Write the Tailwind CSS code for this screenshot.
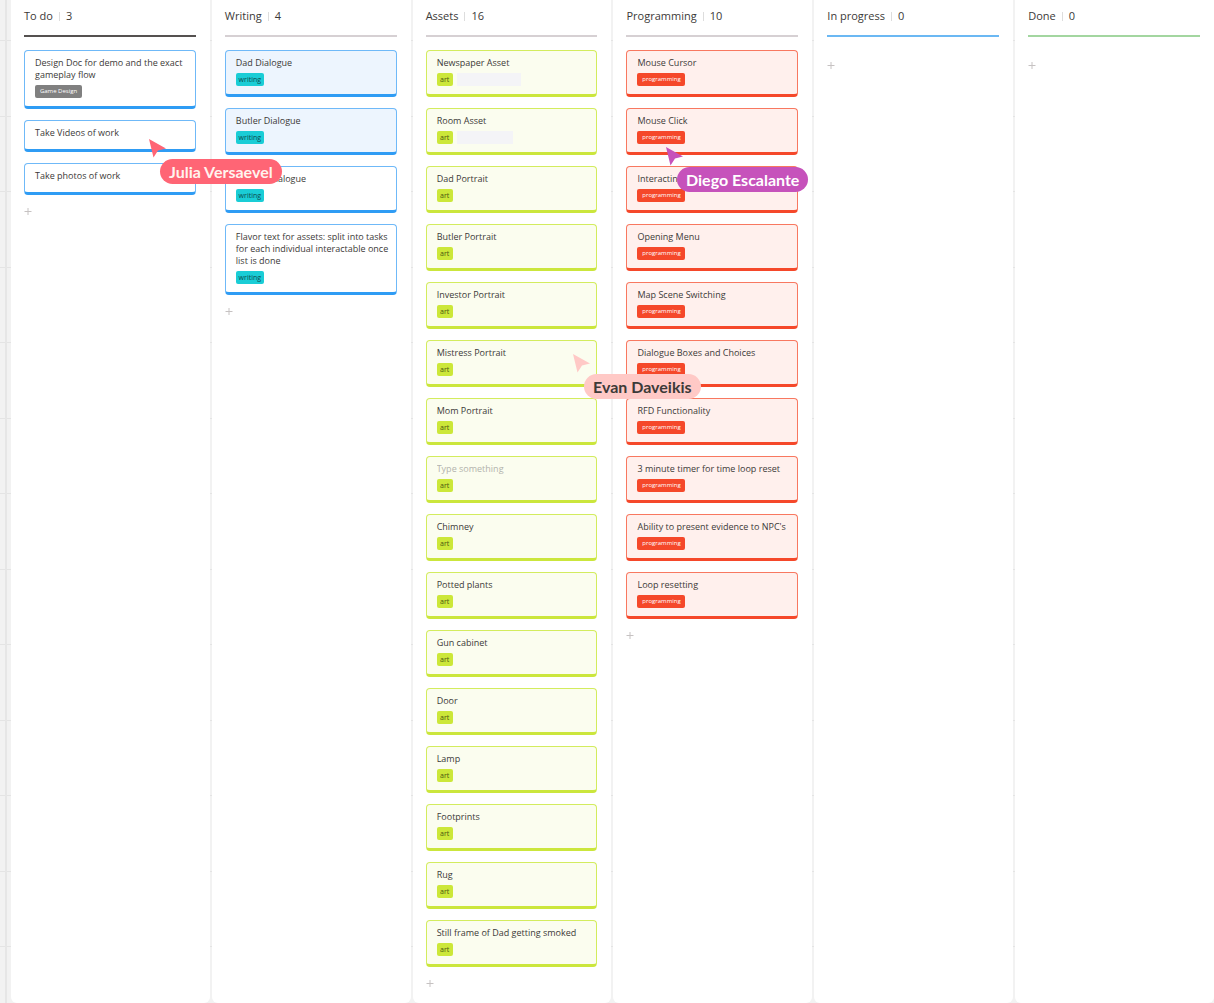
<!DOCTYPE html>
<html lang="en">
<head>
  <meta charset="UTF-8" />
  <meta name="viewport" content="width=device-width, initial-scale=1" />
  <title>Game Board</title>
  <script src="https://cdn.jsdelivr.net/npm/@tailwindcss/browser@4"></script>
  <style>
    body {
      font-family: 'Open Sans', 'Noto Sans', sans-serif;
    }
    .cursor-name {
      font-family: Lato, sans-serif;
    }
    /* canvas grid behind the columns */
    .canvas {
      background-color: #f2f2f2;
      background-image:
        linear-gradient(90deg, transparent 5px, #e6e6e6 5px, #e6e6e6 7px, transparent 7px),
        repeating-linear-gradient(180deg, #e4e4e4 0, #e4e4e4 1px, transparent 1px, transparent 75px, #e4e4e4 75px, #e4e4e4 76px, transparent 76px, transparent 151px);
      background-position: 0 0, 0 -35px;
      background-size: auto, 100% 1208px;
    }
  </style>
</head>
<body class="relative overflow-x-hidden text-[#3c3a38]">

  <main id="board" class="canvas grid min-h-screen grid-cols-6 gap-[2px] pl-[11px]">
    <!-- Columns are added here -->
  </main>

  <!-- Live cursors -->
  <div class="absolute left-[148px] top-[138px] pl-3 pt-[21px]">
    <svg class="absolute left-0 top-0" width="20" height="20" viewBox="0 0 20 20"><path d="M1 1 L18 10.5 L10 12.5 L5.5 19.5 Z" fill="#ff6575" /></svg>
    <span class="cursor-name block rounded-full bg-[#ff6575] px-[9px] text-[16px]/[25px] font-bold whitespace-nowrap text-[#fff3ee]">Julia Versaevel</span>
  </div>
  <div class="absolute left-[665px] top-[146px] pl-3 pt-[21px]">
    <svg class="absolute left-0 top-0" width="20" height="20" viewBox="0 0 20 20"><path d="M1 1 L18 10.5 L10 12.5 L5.5 19.5 Z" fill="#c652bb" /></svg>
    <span class="cursor-name block rounded-full bg-[#c652bb] px-[9px] text-[16px]/[25px] font-bold whitespace-nowrap text-white">Diego Escalante</span>
  </div>
  <div class="absolute left-[572px] top-[353px] pl-3 pt-[21px]">
    <svg class="absolute left-0 top-0" width="20" height="20" viewBox="0 0 20 20"><path d="M1 1 L18 10.5 L10 12.5 L5.5 19.5 Z" fill="#ffc9c6" /></svg>
    <span class="cursor-name block rounded-full bg-[#ffc9c6] px-[9px] text-[16px]/[25px] font-bold whitespace-nowrap text-[#3c3a38]">Evan Daveikis</span>
  </div>

  <script>
    const cardStyles = {
      blue: 'border-[#6fb9f8] border-b-[#2f9cf4] bg-white',
      blueFill: 'border-[#6fb9f8] border-b-[#2f9cf4] bg-[#edf5fe]',
      lime: 'border-[#d3ec5e] border-b-[#cbe63c] bg-[#fbfdef]',
      red: 'border-[#f87860] border-b-[#f5482a] bg-[#fff0ed]',
    };

    const tagStyles = {
      'Game Design': 'w-[47px] bg-[#808080] text-[6px] text-white',
      writing: 'w-7 bg-[#1acdd6] text-[7px] text-[#0b4a50]',
      art: 'w-4 bg-[#cce739] text-[7px] text-[#4a5410]',
      programming: 'w-12 bg-[#f5482a] text-[6px] text-white',
    };

    const art = (title, extra) => ({ title, tag: 'art', style: 'lime', extra });
    const code = (title) => ({ title, tag: 'programming', style: 'red' });

    const columns = [
      { name: 'To do', count: 3, line: 'bg-[#555150]', cards: [
        { title: 'Design Doc for demo and the exact gameplay flow', tag: 'Game Design', style: 'blue' },
        { title: 'Take Videos of work', style: 'blue' },
        { title: 'Take photos of work', style: 'blue' },
      ] },
      { name: 'Writing', count: 4, line: 'bg-[#d6d0d3]', cards: [
        { title: 'Dad Dialogue', tag: 'writing', style: 'blueFill' },
        { title: 'Butler Dialogue', tag: 'writing', style: 'blueFill' },
        { title: 'Mother Dialogue', tag: 'writing', style: 'blue' },
        { title: 'Flavor text for assets: split into tasks for each individual interactable once list is done', tag: 'writing', style: 'blue' },
      ] },
      { name: 'Assets', count: 16, line: 'bg-[#d6d0d3]', cards: [
        art('Newspaper Asset', 'w-16'), art('Room Asset', 'w-14'), art('Dad Portrait'), art('Butler Portrait'),
        art('Investor Portrait'), art('Mistress Portrait'), art('Mom Portrait'), art(''),
        art('Chimney'), art('Potted plants'), art('Gun cabinet'), art('Door'),
        art('Lamp'), art('Footprints'), art('Rug'), art('Still frame of Dad getting smoked'),
      ] },
      { name: 'Programming', count: 10, line: 'bg-[#d6d0d3]', cards: [
        code('Mouse Cursor'), code('Mouse Click'), code('Interacting'), code('Opening Menu'),
        code('Map Scene Switching'), code('Dialogue Boxes and Choices'), code('RFD Functionality'),
        code('3 minute timer for time loop reset'), code("Ability to present evidence to NPC's"), code('Loop resetting'),
      ] },
      { name: 'In progress', count: 0, line: 'bg-[#6bb8f3]', cards: [] },
      { name: 'Done', count: 0, line: 'bg-[#a3d6a0]', cards: [] },
    ];

    function cardHtml(card) {
      const title = card.title
        ? `<h3>${card.title}</h3>`
        : `<input type="text" aria-label="Card title" placeholder="Type something" class="block h-3 w-full placeholder:text-[#b3b3ad] focus:outline-none" />`;
      const extra = card.extra ? `<span class="h-[13px] bg-[#f4f4f7] ${card.extra}"></span>` : '';
      const tags = card.tag
        ? `<div class="mt-1 mb-[2px] flex gap-1"><span class="h-[13px] rounded-xs text-center leading-[13px] whitespace-nowrap ${tagStyles[card.tag]}">${card.tag}</span>${extra}</div>`
        : '';
      return `<li class="min-h-8 rounded-sm border border-b-3 py-[6px] pr-1 pl-[10px] text-[9px]/[12px] ${cardStyles[card.style]}">${title}${tags}</li>`;
    }

    document.getElementById('board').innerHTML = columns.map((col) => `
      <section class="rounded-b-md bg-white pr-[14px] pl-[13px]">
        <header class="flex h-8 items-center gap-[6px] text-[11px]">
          <h2>${col.name}</h2>
          <span class="h-[9px] w-px bg-[#dddddd]"></span>
          <span>${col.count}</span>
        </header>
        <div class="mt-[3px] h-[2px] ${col.line}"></div>
        <ul class="mt-[13px] flex flex-col gap-[11px]">${col.cards.map(cardHtml).join('')}</ul>
        <button type="button" aria-label="Add card to ${col.name}" class="block size-[10px] cursor-pointer ${col.cards.length ? 'mt-[11px]' : 'mt-[10px]'}">
          <svg width="8" height="10" viewBox="0 0 8 10" stroke="#c6c2c2"><path d="M.5 5.5h7M4 2v7" /></svg>
        </button>
      </section>`).join('');
  </script>

</body>
</html>
